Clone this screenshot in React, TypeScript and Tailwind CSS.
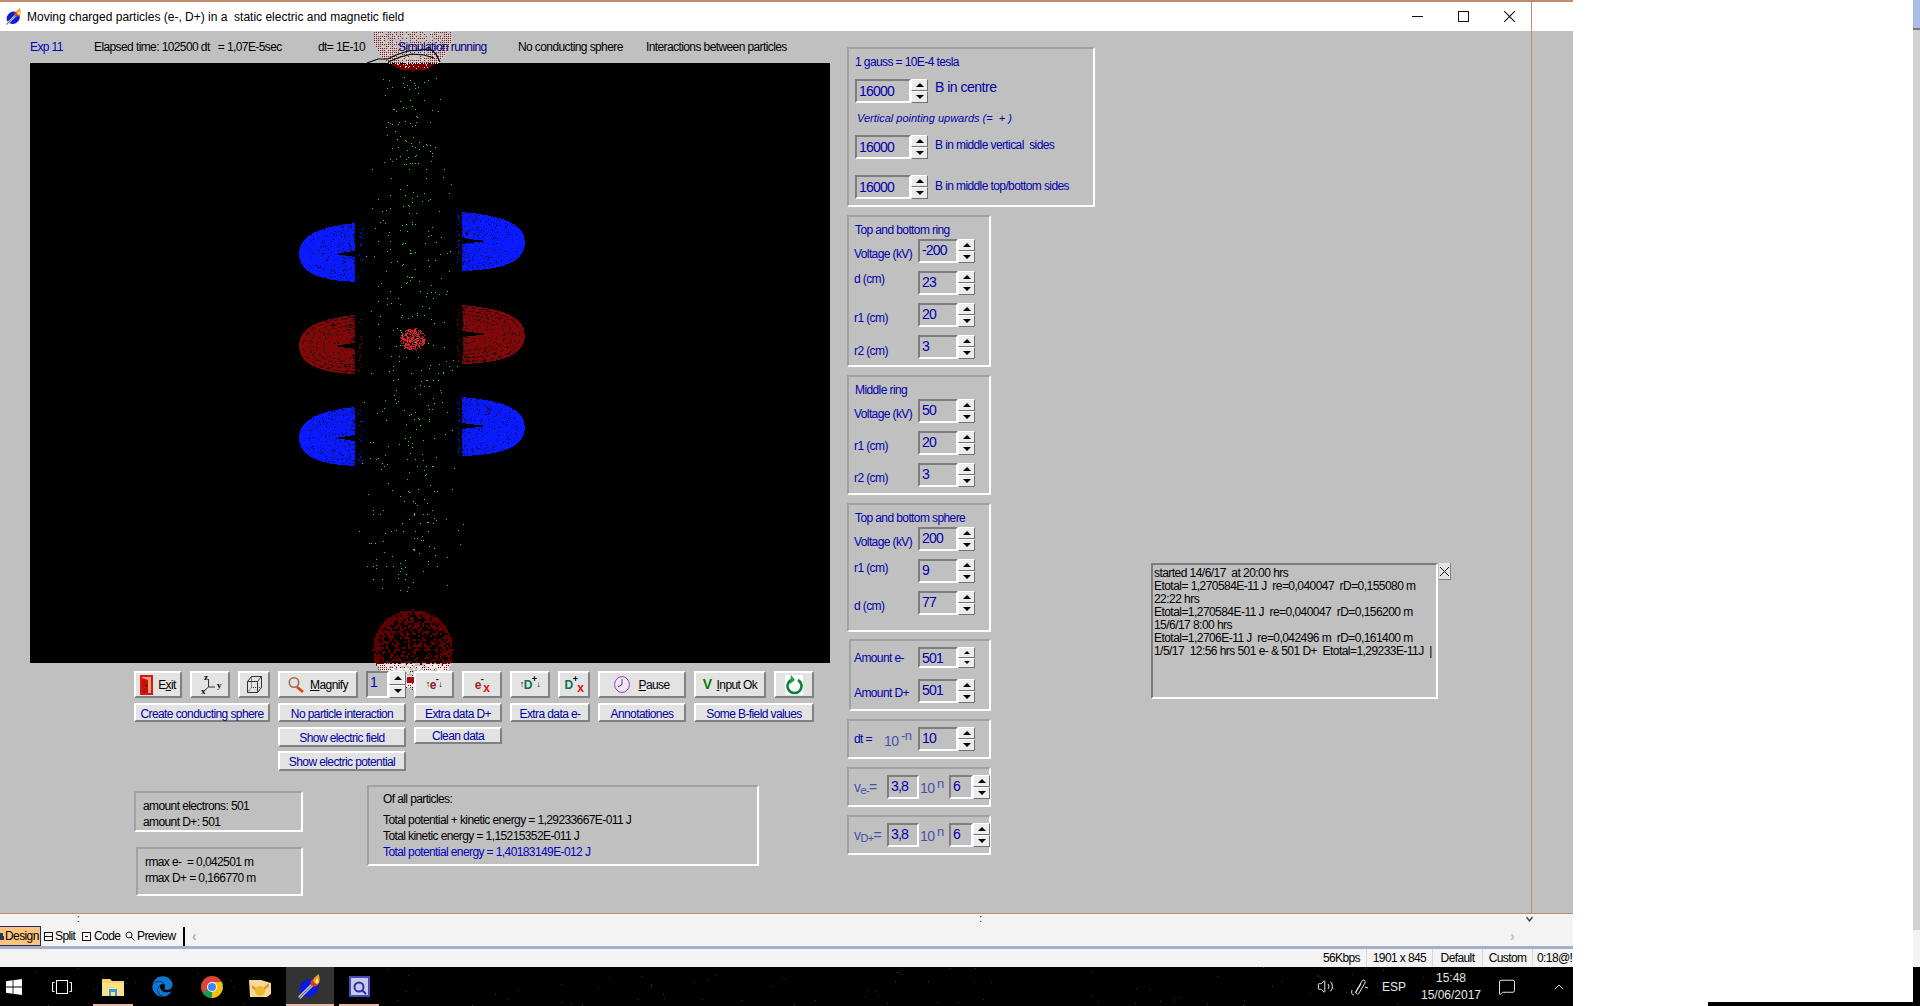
import type { ReactNode } from "react";
import { FaEdge } from "react-icons/fa";
import { ChevronUp, MessageSquare, Volume2 } from "lucide-react";

// seeded random so the particle picture is the same every load
function rng(seed: number) {
  let a = seed;
  return () => {
    a = (a + 0x6d2b79f5) | 0;
    let t = Math.imul(a ^ (a >>> 15), 1 | a);
    t = (t + Math.imul(t ^ (t >>> 7), 61 | t)) ^ t;
    return ((t ^ (t >>> 14)) >>> 0) / 4294967296;
  };
}

const px = (x: number, y: number, s = 1) => `M${x} ${y}h${s}v${s}h-${s}z`;

function greenDots() {
  const r = rng(11);
  let d = "";
  for (let i = 0; i < 430; i++) {
    const y = 76 + r() * 515;
    const spread = 30 + 24 * Math.min(1, (y - 70) / 200);
    const x = 412 + (r() + r() - 1) * spread;
    d += px(Math.round(x), Math.round(y));
  }
  return d;
}

function cluster() {
  const r = rng(5);
  let d = "";
  for (let i = 0; i < 340; i++) {
    const a = r() * 6.283;
    const k = Math.sqrt(r());
    d += px(Math.round(412.5 + Math.cos(a) * 13 * k), Math.round(339 + Math.sin(a) * 11 * k));
  }
  return d;
}

function sphere(cx: number, cy: number, radius: number, seed: number, yMin: number, yMax: number, base: number, size = 1) {
  const r = rng(seed);
  let d = "";
  for (let y = cy - radius; y <= cy + radius; y += 2) {
    for (let x = cx - radius; x <= cx + radius; x += 2) {
      const dist = Math.hypot(x - cx, y - cy) / radius;
      if (dist > 1 || y < yMin || y > yMax) continue;
      if (r() < base + 0.7 * Math.pow(dist, 5)) d += px(x, y, size);
    }
  }
  return d;
}

function speckle(x0: number, x1: number, y0: number, y1: number, count: number, seed: number, pull: number) {
  const r = rng(seed);
  let d = "";
  for (let i = 0; i < count; i++) {
    const k = Math.pow(r(), pull);
    d += px(Math.round(x0 + (x1 - x0) * k), Math.round(y0 + (y1 - y0) * r()));
  }
  return d;
}

function Lobe({ side, top, color, red, seed }: { side: "l" | "r"; top: number; color: string; red?: boolean; seed: number }) {
  const left = side === "l";
  const outer = left ? 299 : 525;
  const inner = left ? 355 : 462;
  const tip = left ? 335 : 487;
  const s = left ? 1 : -1;
  const mid = top + (left ? 31 : 29);
  const bottom = top + 59;
  const d = `M${inner} ${top}C${outer + s * 16} ${top + 4} ${outer} ${top + 14} ${outer} ${top + 31}C${outer} ${bottom - 12} ${outer + s * 16} ${bottom - 1} ${inner} ${bottom}L${inner} ${mid + 3}L${tip} ${mid}L${inner} ${mid - 3}Z`;
  const fromX = left ? inner + 3 : inner - 3;
  const toX = left ? outer + 8 : outer - 8;
  return (
    <g>
      <path d={d} fill={color} />
      <path d={speckle(fromX, toX, top, bottom, red ? 300 : 260, seed, 2.8)} fill="#000" />
      <path d={speckle(fromX, left ? inner + 7 : inner - 5, top + 3, bottom - 3, 22, seed + 1, 1)} fill={color} />
      {(red ? [0.92, 0.8, 0.68, 0.56] : [0.8]).map((k) => (
        <g key={k} transform={`translate(${inner} ${mid}) scale(${k}) translate(${-inner} ${-mid})`}>
          <path d={d} fill="none" stroke="#000" strokeWidth={red ? 1 : 0.5} strokeDasharray="5 4" opacity={red ? 0.7 : 0.35} />
        </g>
      ))}
    </g>
  );
}

const GREEN = greenDots();
const CLUSTER = cluster();
const TOP_DARK = sphere(412, 30, 40, 21, 31, 63, 0.5);
const TOP_LOW = sphere(412, 30, 40, 22, 63, 71, 0.8, 1.5);
const BOT_DARK = sphere(412, 649, 40, 23, 609, 663, 0.36, 1.5);
const BOT_LOW = sphere(412, 649, 40, 24, 663, 689, 0.3);
const BOT_PALE = sphere(413, 648, 40, 25, 663, 689, 0.6, 1.5);
const TOP_PALE = sphere(413, 31, 40, 26, 31, 63, 0.4);
const STARS = (() => {
  const r = rng(33);
  let d = "";
  for (let i = 0; i < 110; i++) d += px(Math.round(r() * 1573), Math.round(r() * 39));
  return d;
})();

function ParticleLayer() {
  return (
    <svg className="absolute left-0 top-0 w-[847px] h-[882px]" viewBox="0 31 847 882" shapeRendering="crispEdges">
      <path d={TOP_PALE} fill="#e6dcdc" />
      <path d={TOP_DARK} fill="#8c1a1a" />
      <path d={TOP_LOW} fill="#7a0000" />
      <path d={speckle(396, 430, 55, 68, 70, 41, 1)} fill="#eec8c8" />
      <g shapeRendering="auto" fill="none" stroke="#000" strokeWidth="1.2">
        <path d="M367 63L378 59L388 59L396 55L408 51L420 50L430 49L436 54L440 62" />
        <path d="M388 62L400 57L412 54L424 55L434 58" />
      </g>
      <path d={BOT_DARK} fill="#5c0000" />
      <path d={BOT_PALE} fill="#efe6e6" />
      <path d={BOT_LOW} fill="#8c0f0f" />
      <path d="M407 677h7v6h-7z" fill="#a01010" />
      <path d={GREEN} fill="#33e033" />
      <Lobe side="l" top={223} color="#0a1aff" seed={1} />
      <Lobe side="r" top={212} color="#0a1aff" seed={2} />
      <Lobe side="l" top={315} color="#7f0808" red seed={3} />
      <Lobe side="r" top={305} color="#7f0808" red seed={4} />
      <Lobe side="l" top={407} color="#0a1aff" seed={5} />
      <Lobe side="r" top={397} color="#0a1aff" seed={6} />
      <path d={CLUSTER} fill="#e8262a" />
    </svg>
  );
}

function Btn({ className, children }: { className: string; children: ReactNode }) {
  return (
    <div className={`flex items-center justify-center box-border bg-[#e3e3e3] border-2 border-t-white border-l-white border-b-[#808080] border-r-[#808080] text-[12px] whitespace-pre ${className}`}>
      {children}
    </div>
  );
}

function Arrow({ up, small }: { up?: boolean; small?: boolean }) {
  return (
    <div className="flex flex-1 items-center justify-center box-border bg-[#ececec] border border-t-white border-l-white border-b-[#707070] border-r-[#707070]">
      <svg width={small ? 6 : 8} height={small ? 3 : 4} viewBox="0 0 8 4">
        <path d={up ? "M4 0L8 4H0Z" : "M0 0H8L4 4Z"} fill="#000" />
      </svg>
    </div>
  );
}

function Spin({ value, w, h = "h-[24px]", pad = "pt-0", small }: { value: string; w: string; h?: string; pad?: string; small?: boolean }) {
  return (
    <div className={`flex shrink-0 ${h}`}>
      <div className={`box-border bg-[#c0c0c0] border-2 border-t-[#7d7d7d] border-l-[#7d7d7d] border-b-white border-r-white pl-[2px] text-[#0000a8] text-[14px] tracking-[-0.8px] leading-[18px] ${w} ${pad}`}>
        {value}
      </div>
      <div className="flex flex-col w-[17px]">
        <Arrow up small={small} />
        <Arrow small={small} />
      </div>
    </div>
  );
}

function Panel({ className, children }: { className: string; children: ReactNode }) {
  return (
    <div className={`box-border shrink-0 border-2 border-t-[#a2a2a2] border-l-[#a2a2a2] border-b-white border-r-white ${className}`}>
      {children}
    </div>
  );
}

function FieldRow({ label, value, labelClass = "" }: { label: string; value: string; labelClass?: string }) {
  return (
    <div className="flex items-center h-[24px]">
      <span className={`w-[69px] shrink-0 pl-[5px] whitespace-pre text-[12px] ${labelClass}`}>{label}</span>
      <Spin value={value} w="w-[40px]" />
    </div>
  );
}

function RingPanel({ title, rows, h }: { title: string; h: string; rows: { l: string; v: string; c?: string }[] }) {
  return (
    <Panel className={`w-[144px] ${h}`}>
      <div className="h-[22px] pl-[6px] pt-[5px] text-[12px] leading-[16px]">{title}</div>
      <div className="flex flex-col gap-[8px]">
        {rows.map((r) => (
          <FieldRow key={r.l} label={r.l} value={r.v} labelClass={r.c} />
        ))}
      </div>
    </Panel>
  );
}

function Up({ children }: { children: ReactNode }) {
  return <span className="relative -top-[5px] text-[9px]">{children}</span>;
}

function TitleIcon({ size }: { size: number }) {
  return (
    <svg width={size} height={size} viewBox="0 0 24 24">
      <ellipse cx="11" cy="13" rx="9" ry="8" transform="rotate(-30 11 13)" fill="#0a1ae0" />
      <path d="M2 22L14 10" stroke="#c8c8d0" strokeWidth="3" />
      <path d="M2 22L14 10" stroke="#707078" strokeWidth="1" />
      <circle cx="16" cy="8" r="3.5" fill="#e03a10" />
      <path d="M15 7C15 3 18 2 20 0C21 4 22 7 19 10Z" fill="#f0a020" />
      <path d="M17 8C17 6 18 5 19 4C20 6 20 8 18 9Z" fill="#fff3b0" />
    </svg>
  );
}

function Taskbar() {
  return (
    <div className="relative flex items-center h-[39px] bg-black text-[#e8e8e8] text-[12px] tracking-normal">
      <svg className="absolute inset-0 w-full h-full" viewBox="0 0 1573 39" shapeRendering="crispEdges">
        <path d={STARS} fill="#3a3a3a" />
      </svg>
      <div className="relative flex items-center w-full h-full">
        <svg className="ml-[6px]" width="16" height="16" viewBox="0 0 16 16">
          <path d="M0 2.2L6.6 1.3V7.5H0ZM7.4 1.2L16 0V7.5H7.4ZM0 8.4H6.6V14.7L0 13.8ZM7.4 8.4H16V16L7.4 14.8Z" fill="#fff" />
        </svg>
        <svg className="ml-[30px]" width="20" height="14" viewBox="0 0 20 14" fill="none" stroke="#fff" strokeWidth="1">
          <rect x="4.5" y="0.5" width="11" height="13" />
          <path d="M2.5 2.5H0.5V11.5H2.5M17.5 2.5H19.5V11.5H17.5" />
        </svg>
        <div className="relative ml-[21px] w-[40px] h-full flex items-center justify-center">
          <svg width="22" height="18" viewBox="0 0 22 18">
            <path d="M0 1H8L10 3H22V18H0Z" fill="#f6d365" />
            <path d="M0 5H22V18H0Z" fill="#fbe08c" />
            <path d="M7 11H15V18H7Z" fill="#2f9fd8" />
            <path d="M9 14H13V18H9Z" fill="#fbe08c" />
          </svg>
          <div className="absolute bottom-0 left-0 right-0 h-[2px] bg-[#e8b8a8]" />
        </div>
        <FaEdge className="ml-[19px] text-[#0f76d2]" size={21} />
        <svg className="ml-[28px]" width="22" height="22" viewBox="0 0 22 22">
          <circle cx="11" cy="11" r="11" fill="#db4437" />
          <path d="M11 11L1.5 16.5A11 11 0 0 0 11 22Z" fill="#0f9d58" />
          <path d="M11 11L20.5 5.5A11 11 0 0 1 20.5 16.5L11 22Z" fill="#0f9d58" />
          <path d="M11 6H20.5A11 11 0 0 1 11 22L11 11Z" fill="#f4c20d" />
          <circle cx="11" cy="11" r="5" fill="#fff" />
          <circle cx="11" cy="11" r="4" fill="#4285f4" />
        </svg>
        <svg className="ml-[26px]" width="22" height="20" viewBox="0 0 22 20">
          <path d="M0 3H12L22 6V17L18 20H1Z" fill="#f4dc98" />
          <path d="M3 8L11 14L20 6V9L11 17L3 11Z" fill="#d89a20" />
          <circle cx="11" cy="14" r="5" fill="#f0b92c" />
        </svg>
        <div className="relative ml-[15px] w-[48px] h-full flex items-center justify-center bg-[#333333]">
          <TitleIcon size={26} />
          <div className="absolute bottom-0 left-0 right-0 h-[2px] bg-[#e8b8a8]" />
        </div>
        <div className="relative ml-[5px] w-[40px] h-full flex items-center justify-center">
          <svg width="21" height="21" viewBox="0 0 21 21">
            <rect width="21" height="21" fill="#4848b8" />
            <rect x="2" y="2" width="17" height="17" fill="#c8c8ec" />
            <circle cx="10" cy="11" r="4.5" fill="none" stroke="#3030a0" strokeWidth="2" />
            <path d="M13 14L17 18" stroke="#3030a0" strokeWidth="2" />
          </svg>
          <div className="absolute bottom-0 left-0 right-0 h-[2px] bg-[#e8b8a8]" />
        </div>
        <Volume2 className="ml-[938px] text-white" size={17} strokeWidth={1.3} />
        <svg className="ml-[17px]" width="18" height="18" viewBox="0 0 18 18" fill="none" stroke="#e8e8e8" strokeWidth="1">
          <path d="M4 15L11 3C12 1 15 2 14 5L8 15C7 17 5 16 5 14L10 6" />
          <path d="M1 12C0 15 1 17 3 17" />
          <path d="M14 9L17 10" />
        </svg>
        <span className="ml-[13px] w-[37px]">ESP</span>
        <div className="w-[64px] flex flex-col items-center leading-[17px]">
          <span>15:48</span>
          <span>15/06/2017</span>
        </div>
        <MessageSquare className="ml-[15px] text-white" size={18} strokeWidth={1.2} />
        <ChevronUp className="ml-[35px] text-white" size={16} strokeWidth={1.3} />
      </div>
    </div>
  );
}

export default function App() {
  return (
    <div className="flex w-[1920px] h-[1006px] overflow-hidden bg-white text-black tracking-[-0.6px] font-['Liberation_Sans',Arial,sans-serif]">
      <div className="flex flex-col w-[1573px] shrink-0">
        {/* title bar */}
        <div className="flex h-[31px] shrink-0 bg-white border-t-2 border-[#c08a6c] tracking-normal">
          <div className="flex items-center w-[1532px] shrink-0 border-r border-[#c08a6c]">
            <div className="ml-[5px] w-[22px]">
              <TitleIcon size={18} />
            </div>
            <span className="text-[12px] whitespace-pre">Moving charged particles (e-, D+) in a  static electric and magnetic field</span>
            <div className="ml-auto mr-[16px] flex items-center gap-[35px]">
              <svg width="11" height="11" viewBox="0 0 11 11"><path d="M0 5.5H11" stroke="#111" /></svg>
              <svg width="11" height="11" viewBox="0 0 11 11"><rect x="0.5" y="0.5" width="10" height="10" fill="none" stroke="#111" /></svg>
              <svg width="11" height="11" viewBox="0 0 11 11"><path d="M0 0L11 11M11 0L0 11" stroke="#111" strokeWidth="1.1" /></svg>
            </div>
          </div>
        </div>

        {/* the form */}
        <div className="flex h-[882px] shrink-0 bg-[#c0c0c0] overflow-hidden">
          <div className="flex w-[1532px] shrink-0 border-r border-[#c08a6c]">
            <div className="relative w-[847px] shrink-0 pl-[30px]">
              <div className="w-[800px] h-[600px] mt-[32px] bg-black" />
              <ParticleLayer />
              <div className="absolute left-[30px] top-0 h-[32px] flex items-center text-[12px] whitespace-pre">
                <span className="w-[64px] text-[#0000c0]">Exp 11</span>
                <span className="w-[224px]">Elapsed time: 102500 dt   = 1,07E-5sec</span>
                <span className="w-[80px]">dt= 1E-10</span>
                <span className="w-[120px] text-[#000080]">Simulation running</span>
                <span className="w-[128px]">No conducting sphere</span>
                <span>Interactions between particles</span>
              </div>

              <div className="relative ml-[104px] text-[#0000a0]">
                {/* toolbar */}
                <div className="flex gap-[8px] mt-[8px] h-[27px] text-black">
                  <Btn className="w-[48px]">
                    <svg className="mr-[5px]" width="13" height="20" viewBox="0 0 13 20">
                      <rect width="13" height="20" fill="#d81818" />
                      <rect x="2" y="2" width="9" height="16" fill="#f4a070" />
                      <path d="M2 3L8 5V18H2Z" fill="#c01010" />
                      <rect x="6" y="10" width="1" height="1" fill="#000" />
                    </svg>
                    <span>E<u>x</u>it</span>
                  </Btn>
                  <Btn className="relative w-[40px]">
                    <svg width="20" height="23" viewBox="0 0 20 23" stroke="#333" fill="none" strokeWidth="1">
                      <path d="M8.5 6V14M8.5 14H15M8.5 14L4 18" />
                    </svg>
                    <span className="absolute left-[12px] top-[-2px] text-[9px] font-bold font-['Liberation_Serif',serif]">z</span>
                    <span className="absolute right-[7px] top-[6px] text-[9px] font-bold font-['Liberation_Serif',serif]">y</span>
                    <span className="absolute left-[9px] bottom-[-2px] text-[9px] font-bold font-['Liberation_Serif',serif]">x</span>
                  </Btn>
                  <Btn className="w-[32px]">
                    <svg width="15" height="17" viewBox="0 0 15 17" fill="none" stroke="#333" strokeWidth="1">
                      <path d="M0.5 5.5H10.5V16.5H0.5ZM0.5 5.5L4.5 0.5H14.5L10.5 5.5M14.5 0.5V11.5L10.5 16.5" />
                      <path d="M0.5 16.5L4.5 11.5H14.5M4.5 0.5V11.5" strokeDasharray="1 1" />
                    </svg>
                  </Btn>
                  <Btn className="w-[80px]">
                    <svg className="mr-[6px]" width="16" height="17" viewBox="0 0 16 17">
                      <path d="M9 11L15 16" stroke="#e04010" strokeWidth="2.6" />
                      <circle cx="6" cy="6.5" r="4.7" fill="#d8e6f4" stroke="#b06838" strokeWidth="1.6" />
                    </svg>
                    <span><u>M</u>agnify</span>
                  </Btn>
                  <div className="flex w-[40px]">
                    <div className="w-[23px] box-border bg-[#c0c0c0] border-2 border-t-[#7d7d7d] border-l-[#7d7d7d] border-b-white border-r-white pl-[2px] text-[14px] leading-[18px] text-[#0000c0]">1</div>
                    <div className="flex flex-col w-[17px]">
                      <Arrow up />
                      <Arrow />
                    </div>
                  </div>
                  <Btn className="w-[40px] font-bold">
                    <span className="text-[9px]">↑</span>
                    <span className="text-[#902020]">e</span>
                    <Up>-</Up>
                    <span className="text-[9px]">↓</span>
                  </Btn>
                  <Btn className="w-[40px] font-bold">
                    <span className="text-[#a02828]">e</span>
                    <Up>-</Up>
                    <span className="text-[#e01010] relative top-[3px]">x</span>
                  </Btn>
                  <Btn className="w-[40px] font-bold">
                    <span className="text-[9px]">↑</span>
                    <span className="text-[#107050]">D</span>
                    <Up>+</Up>
                    <span className="text-[9px]">↓</span>
                  </Btn>
                  <Btn className="w-[32px] font-bold">
                    <span className="text-[#107050]">D</span>
                    <Up>+</Up>
                    <span className="text-[#e01010] relative top-[3px]">x</span>
                  </Btn>
                  <Btn className="w-[88px]">
                    <svg className="mr-[8px]" width="16" height="17" viewBox="0 0 16 17" fill="#f0e8f4" stroke="#9040b0" strokeWidth="1">
                      <ellipse cx="8" cy="8.5" rx="7.4" ry="7.9" />
                      <path d="M8 3V8.5L4 11" fill="none" stroke="#404080" />
                    </svg>
                    <span><u>P</u>ause</span>
                  </Btn>
                  <Btn className="w-[72px]">
                    <span className="mr-[5px] text-[#0a7a0a] font-bold text-[14px]">V</span>
                    <span><u>I</u>nput Ok</span>
                  </Btn>
                  <Btn className="w-[40px]">
                    <svg width="18" height="20" viewBox="0 0 18 20">
                      <rect width="18" height="20" fill="#fff" />
                      <path d="M6 5A7 7 0 1 0 13 5" fill="none" stroke="#108038" strokeWidth="2.6" />
                      <path d="M6 0L10 5L5 9Z" fill="#18a048" />
                    </svg>
                  </Btn>
                </div>

                {/* caption buttons */}
                <div className="flex gap-[8px] mt-[5px] h-[19px]">
                  <Btn className="w-[136px] pt-[2px]">Create conducting sphere</Btn>
                  <Btn className="w-[128px] pt-[2px]">No particle interaction</Btn>
                  <Btn className="w-[88px] pt-[2px]">Extra data D+</Btn>
                  <Btn className="w-[80px] pt-[2px]">Extra data e-</Btn>
                  <Btn className="w-[88px] pt-[2px]">Annotationes</Btn>
                  <Btn className="w-[120px] pt-[2px]">Some B-field values</Btn>
                </div>
                <div className="flex gap-[8px] ml-[144px] mt-[5px]">
                  <div className="flex flex-col gap-[4px]">
                    <Btn className="w-[128px] h-[20px] pt-[2px]">Show electric field</Btn>
                    <Btn className="w-[128px] h-[20px] pt-[2px]">Show electric potential</Btn>
                  </div>
                  <Btn className="w-[88px] h-[17px]">Clean data</Btn>
                </div>

                {/* read outs */}
                <div className="flex mt-[14px] text-black text-[12px] leading-[16px] whitespace-pre">
                  <div className="flex flex-col items-end w-[169px] pt-[6px] gap-[15px]">
                    <Panel className="w-[169px] h-[41px] pl-[7px] pt-[5px]">
                      <div>amount electrons: 501</div>
                      <div>amount D+: 501</div>
                    </Panel>
                    <Panel className="w-[167px] h-[49px] pl-[7px] pt-[5px]">
                      <div>rmax e-  = 0,042501 m</div>
                      <div>rmax D+ = 0,166770 m</div>
                    </Panel>
                  </div>
                  <Panel className="ml-[64px] w-[392px] h-[81px] pl-[14px] pt-[4px]">
                    <div className="mb-[5px]">Of all particles:</div>
                    <div>Total potential + kinetic energy = 1,29233667E-011 J</div>
                    <div>Total kinetic energy = 1,15215352E-011 J</div>
                    <div className="text-[#0000c0]">Total potential energy = 1,40183149E-012 J</div>
                  </Panel>
                </div>
              </div>
            </div>

            {/* input panels */}
            <div className="flex flex-col w-[248px] shrink-0 pt-[16px] gap-[8px] text-[#0000a8]">
              <Panel className="w-[248px] h-[160px] pl-[6px]">
                <div className="h-[30px] pt-[5px] text-[12px] leading-[16px]">1 gauss = 10E-4 tesla</div>
                <div className="flex items-start">
                  <Spin value="16000" w="w-[56px]" pad="pt-[1px]" />
                  <span className="ml-[7px] text-[14px] leading-[16px] tracking-[-0.5px]">B in centre</span>
                </div>
                <div className="h-[32px] pt-[7px] pl-[2px] text-[11px] leading-[16px] italic whitespace-pre tracking-normal">Vertical pointing upwards (=  + )</div>
                <div className="flex items-center">
                  <Spin value="16000" w="w-[56px]" pad="pt-[1px]" />
                  <span className="ml-[7px] mb-[4px] text-[12px] whitespace-pre">B in middle vertical  sides</span>
                </div>
                <div className="flex items-center mt-[16px]">
                  <Spin value="16000" w="w-[56px]" pad="pt-[1px]" />
                  <span className="ml-[7px] mb-[3px] text-[12px]">B in middle top/bottom sides</span>
                </div>
              </Panel>
              <RingPanel
                title="Top and bottom ring"
                h="h-[152px]"
                rows={[
                  { l: "Voltage (kV)", v: "-200", c: "mt-[5px]" },
                  { l: "d (cm)", v: "23", c: "mb-[8px]" },
                  { l: "r1 (cm)", v: "20", c: "mt-[6px]" },
                  { l: "r2 (cm)", v: "3", c: "mt-[8px]" },
                ]}
              />
              <RingPanel
                title="Middle ring"
                h="h-[120px]"
                rows={[
                  { l: "Voltage (kV)", v: "50", c: "mt-[5px]" },
                  { l: "r1 (cm)", v: "20", c: "mt-[6px]" },
                  { l: "r2 (cm)", v: "3", c: "mt-[6px]" },
                ]}
              />
              <RingPanel
                title="Top and bottom sphere"
                h="h-[129px]"
                rows={[
                  { l: "Voltage (kV)", v: "200", c: "mt-[5px]" },
                  { l: "r1 (cm)", v: "9", c: "mb-[6px]" },
                  { l: "d (cm)", v: "77", c: "mt-[6px]" },
                ]}
              />
              <Panel className="w-[142px] h-[72px] ml-[2px] -mt-[1px] pt-[6px]">
                <div className="flex items-center h-[21px]">
                  <span className="w-[67px] shrink-0 pl-[3px] text-[12px]">Amount e-</span>
                  <Spin value="501" w="w-[40px]" h="h-[21px]" small />
                </div>
                <div className="flex items-center h-[24px] mt-[11px]">
                  <span className="w-[67px] shrink-0 pl-[3px] text-[12px] mt-[4px]">Amount D+</span>
                  <Spin value="501" w="w-[40px]" />
                </div>
              </Panel>
              <Panel className="w-[144px] h-[40px] pt-[6px] pl-[5px]">
                <div className="flex items-center h-[24px]">
                  <span className="w-[30px] shrink-0 text-[12px]">dt =</span>
                  <span className="w-[15px] shrink-0 mt-[4px] text-[14px] text-[#4a4fa8]">10</span>
                  <span className="w-[19px] shrink-0 mb-[6px] pl-[2px] text-[13px] text-[#4a4fa8] whitespace-pre">-n</span>
                  <Spin value="10" w="w-[40px]" />
                </div>
              </Panel>
              {["e-", "D+"].map((s) => (
                <Panel key={s} className="w-[144px] h-[40px] pt-[6px] pl-[5px]">
                  <div className="flex items-center h-[24px]">
                    <span className="w-[33px] shrink-0 text-[14px] text-[#4a4fa8] whitespace-pre">
                      v<sub className="text-[11px]">{s}</sub>=
                    </span>
                    <div className="w-[32px] h-[24px] shrink-0 box-border border-2 border-t-[#7d7d7d] border-l-[#7d7d7d] border-b-white border-r-white pl-[2px] text-[14px] tracking-[-0.8px] leading-[18px]">3,8</div>
                    <span className="ml-[1px] w-[15px] shrink-0 mt-[3px] text-[14px] text-[#4a4fa8]">10</span>
                    <span className="w-[14px] shrink-0 mb-[6px] pl-[2px] text-[13px] text-[#4a4fa8]">n</span>
                    <Spin value="6" w="w-[24px]" />
                  </div>
                </Panel>
              ))}
            </div>

            {/* notes */}
            <div className="flex shrink-0 ml-[56px] mt-[532px] h-[136px]">
              <div className="w-[287px] h-[136px] box-border border-2 border-t-[#7d7d7d] border-l-[#7d7d7d] border-b-white border-r-white pl-[1px] pt-[2px] text-[12px] leading-[13px] whitespace-pre tracking-[-0.55px]">
                <div>started 14/6/17  at 20:00 hrs</div>
                <div>Etotal= 1,270584E-11 J  re=0,040047  rD=0,155080 m</div>
                <div>22:22 hrs</div>
                <div>Etotal=1,270584E-11 J  re=0,040047  rD=0,156200 m</div>
                <div>15/6/17 8:00 hrs</div>
                <div>Etotal=1,2706E-11 J  re=0,042496 m  rD=0,161400 m</div>
                <div>1/5/17  12:56 hrs 501 e- &amp; 501 D+  Etotal=1,29233E-11J  |</div>
              </div>
              <div className="w-[12px] h-[17px] ml-[1px] flex items-center justify-center bg-[#e3e3e3] border-b border-r border-[#808080]">
                <svg width="9" height="9" viewBox="0 0 9 9"><path d="M0 0L9 9M9 0L0 9" stroke="#111" /></svg>
              </div>
            </div>
          </div>
        </div>

        {/* editor strip */}
        <div className="flex flex-col h-[54px] shrink-0 bg-[#f3f3f3] border-t border-[#c08a6c] text-[12px]">
          <div className="flex h-[12px] shrink-0 items-start text-[10px] leading-[10px]">
            <span className="ml-[77px]">:</span>
            <span className="ml-[900px]">:</span>
            <svg className="ml-[545px] mt-[2px]" width="7" height="6" viewBox="0 0 7 6" fill="none" stroke="#444" strokeWidth="1.4">
              <path d="M0.5 1L3.5 5L6.5 1" />
            </svg>
          </div>
          <div className="flex items-center h-[20px] shrink-0">
            <div className="flex items-center shrink-0 w-[41px] h-[20px] box-border bg-[#fbc37c] border border-l-0 border-[#1a2a6c]">
              <svg className="mr-[1px]" width="4" height="9" viewBox="0 0 4 9"><path d="M0 1H3V4H4V8H0Z" fill="#223a50" /></svg>
              Design
            </div>
            <svg className="ml-[3px] shrink-0" width="9" height="9" viewBox="0 0 9 9" fill="none" stroke="#111"><rect x="0.5" y="0.5" width="8" height="8" /><path d="M0 4.5H9" /></svg>
            <span className="ml-[2px] w-[27px] shrink-0">Split</span>
            <svg className="shrink-0" width="9" height="9" viewBox="0 0 9 9" fill="none" stroke="#111"><rect x="0.5" y="0.5" width="8" height="8" /><path d="M3 4.5H6" /></svg>
            <span className="ml-[3px] w-[31px] shrink-0">Code</span>
            <svg className="shrink-0" width="10" height="10" viewBox="0 0 10 10" fill="none" stroke="#111"><circle cx="4" cy="4" r="3" /><path d="M6 6L9.5 9.5" /></svg>
            <span className="ml-[2px] w-[39px] shrink-0">Preview</span>
            <div className="ml-[7px] w-[2px] h-[19px] bg-black" />
            <span className="ml-[7px] text-[14px] text-[#b0b0b0] font-bold">‹</span>
            <span className="ml-auto mr-[59px] text-[14px] text-[#c0c0c0] font-bold">›</span>
          </div>
          <div className="h-[3px] shrink-0 bg-[#a6aec8]" />
          <div className="flex flex-1 items-center justify-end whitespace-pre overflow-hidden">
            <span className="w-[45px] pr-[6px] text-right">56Kbps</span>
            <span className="w-[66px] border-l border-[#d8d8d8] text-center">1901 x 845</span>
            <span className="w-[50px] border-l border-[#d8d8d8] text-center">Default</span>
            <span className="w-[50px] border-l border-[#d8d8d8] text-center">Custom</span>
            <span className="w-[41px] border-l border-[#d8d8d8] pl-[4px]">0:18@!</span>
          </div>
        </div>

        <Taskbar />
      </div>

      {/* blank part of the capture, with the edge of another window */}
      <div className="flex flex-1">
        <div className="flex flex-col flex-1">
          <div className="flex-1 bg-white" />
          <div className="flex h-[4px] shrink-0 bg-black">
            <div className="w-[135px] bg-white" />
          </div>
        </div>
        <div className="flex flex-col w-[7px] bg-[#d2d2d2]">
          <div className="h-[28px] bg-[#a9c0e4]" />
          <div className="h-[2px] bg-[#777777]" />
          <div className="h-[900px]" />
          <div className="flex-1 bg-[#f3f3f3]" />
          <div className="h-[39px] bg-black" />
        </div>
      </div>
    </div>
  );
}
